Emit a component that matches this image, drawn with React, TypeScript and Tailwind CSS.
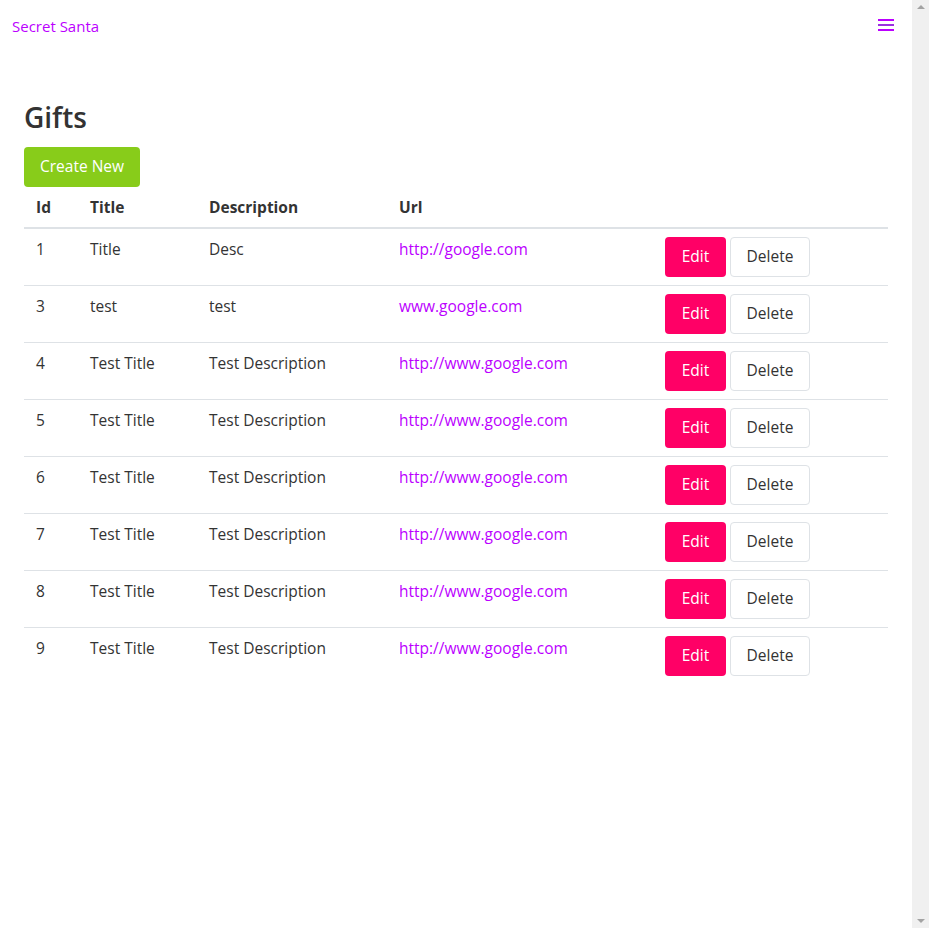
import React from 'react';

type Gift = { id: number; title: string; description: string; url: string };

const gifts: Gift[] = [
  { id: 1, title: 'Title', description: 'Desc', url: 'http://google.com' },
  { id: 3, title: 'test', description: 'test', url: 'www.google.com' },
  { id: 4, title: 'Test Title', description: 'Test Description', url: 'http://www.google.com' },
  { id: 5, title: 'Test Title', description: 'Test Description', url: 'http://www.google.com' },
  { id: 6, title: 'Test Title', description: 'Test Description', url: 'http://www.google.com' },
  { id: 7, title: 'Test Title', description: 'Test Description', url: 'http://www.google.com' },
  { id: 8, title: 'Test Title', description: 'Test Description', url: 'http://www.google.com' },
  { id: 9, title: 'Test Title', description: 'Test Description', url: 'http://www.google.com' },
];

const App: React.FC = () => {
  return (
    <div className="flex h-[928px] w-full overflow-hidden bg-white font-['Open_Sans',sans-serif] text-[#333]">
      <div className="flex-1 min-w-0">
        {/* navbar */}
        <nav className="flex h-[53px] items-center justify-between pl-3 pr-[18px]">
          <a className="text-[15px] text-[#bb00ff]">Secret Santa</a>
          <button className="flex h-5 w-4 flex-col items-center justify-center gap-[3px] -mt-[3px]">
            <span className="block h-[2px] w-4 bg-[#bb00ff]" />
            <span className="block h-[2px] w-4 bg-[#9a30e0]" />
            <span className="block h-[2px] w-4 bg-[#bb00ff]" />
          </button>
        </nav>

        <main className="px-6 pt-[47px] text-[15.5px]">
          <h1 className="mb-[13px] text-[28px] font-semibold leading-[34px] text-[#333]">Gifts</h1>
          <button className="h-10 rounded-[4px] bg-[#88cc1a] px-4 text-white">Create New</button>

          <table className="w-full border-collapse">
            <thead>
              <tr className="border-b-2 border-[#dee2e6]">
                <th className="w-[54px] px-3 py-2 text-left font-bold leading-6">Id</th>
                <th className="w-[119px] px-3 py-2 text-left font-bold leading-6">Title</th>
                <th className="w-[190px] px-3 py-2 text-left font-bold leading-6">Description</th>
                <th className="w-[266px] px-3 py-2 text-left font-bold leading-6">Url</th>
                <th className="px-3" />
              </tr>
            </thead>
            <tbody>
              {gifts.map((g, i) => (
                <tr key={g.id} className={i < gifts.length - 1 ? 'border-b border-[#dee2e6] align-top' : 'align-top'}>
                  <td className="px-3 pt-2 leading-6">{g.id}</td>
                  <td className="px-3 pt-2 leading-6">{g.title}</td>
                  <td className="px-3 pt-2 leading-6">{g.description}</td>
                  <td className="px-3 pt-2 leading-6">
                    <a className="text-[#bb00ff]">{g.url}</a>
                  </td>
                  <td className="px-3 py-2">
                    <div className="flex gap-1">
                      <button className="h-10 w-[61px] rounded-[4px] bg-[#ff0066] text-white">Edit</button>
                      <button className="h-10 w-20 rounded-[4px] border border-[#dee2e6] bg-white text-[#333]">Delete</button>
                    </div>
                  </td>
                </tr>
              ))}
            </tbody>
          </table>
        </main>
      </div>

      {/* fake scrollbar */}
      <div className="flex w-[17px] shrink-0 flex-col items-center justify-between bg-[#f0f0f0] py-[5px]">
        <span className="h-0 w-0 border-x-[4px] border-b-[4px] border-x-transparent border-b-[#a3a3a3]" />
        <span className="h-0 w-0 border-x-[4px] border-t-[4px] border-x-transparent border-t-[#a3a3a3]" />
      </div>
    </div>
  );
};

export default App;
